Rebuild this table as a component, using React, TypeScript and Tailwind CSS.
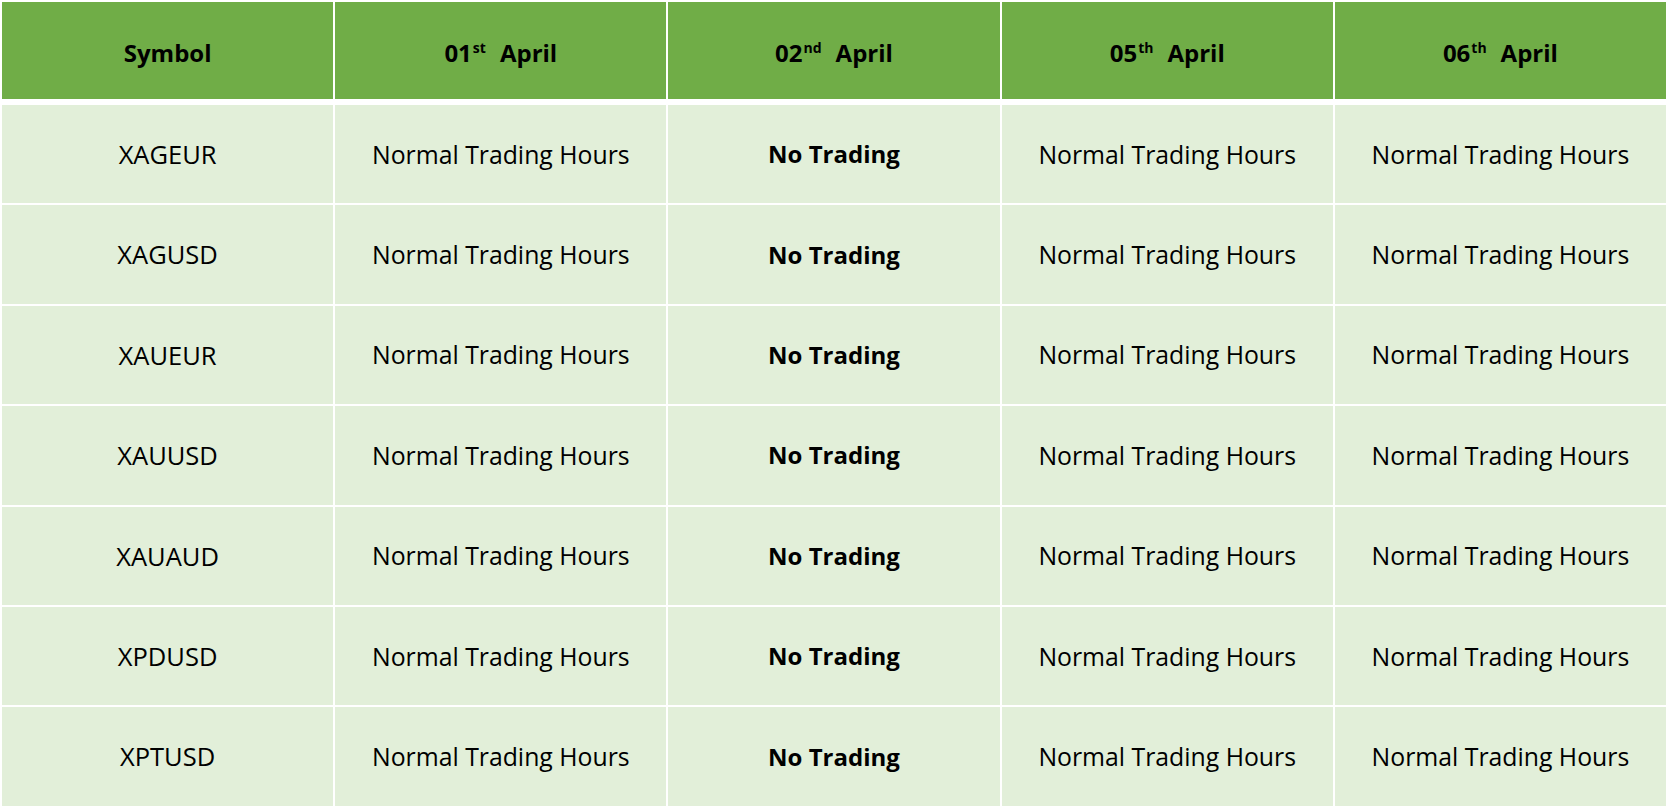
import React from "react";

const symbols = ["XAGEUR", "XAGUSD", "XAUEUR", "XAUUSD", "XAUAUD", "XPDUSD", "XPTUSD"];

const headers: { day: string; sup: string }[] = [
  { day: "01", sup: "st" },
  { day: "02", sup: "nd" },
  { day: "05", sup: "th" },
  { day: "06", sup: "th" },
];

export default function App() {
  return (
    <div
      className="w-[1671px] h-[809px] bg-white pt-[2px] pl-[2px] text-black"
      style={{ fontFamily: '"Open Sans", "Noto Sans", sans-serif' }}
    >
      <div className="w-[1664px]">
        <div className="grid grid-cols-5 gap-x-[2px] h-[97px]">
          <div className="bg-[#70ad47] flex items-center justify-center pt-[4px] font-bold text-[24px]">Symbol</div>
          {headers.map((h) => (
            <div key={h.day} className="bg-[#70ad47] flex items-center justify-center pt-[4px] font-bold text-[24px]">
              <span>
                {h.day}
                <sup className="text-[14px] relative -top-[9px] ml-[1px]">{h.sup}</sup>
                <span className="inline-block w-[14px]" />
                April
              </span>
            </div>
          ))}
        </div>
        <div className="mt-[6px] grid grid-cols-5 gap-[2px] auto-rows-[98.4px]">
          {symbols.map((s) => (
            <React.Fragment key={s}>
              <div className="bg-[#e2efd9] flex items-center justify-center text-[25.5px]">{s}</div>
              <div className="bg-[#e2efd9] flex items-center justify-center text-[24.8px]">Normal Trading Hours</div>
              <div className="bg-[#e2efd9] flex items-center justify-center text-[24px] font-bold">No Trading</div>
              <div className="bg-[#e2efd9] flex items-center justify-center text-[24.8px]">Normal Trading Hours</div>
              <div className="bg-[#e2efd9] flex items-center justify-center text-[24.8px]">Normal Trading Hours</div>
            </React.Fragment>
          ))}
        </div>
      </div>
    </div>
  );
}
